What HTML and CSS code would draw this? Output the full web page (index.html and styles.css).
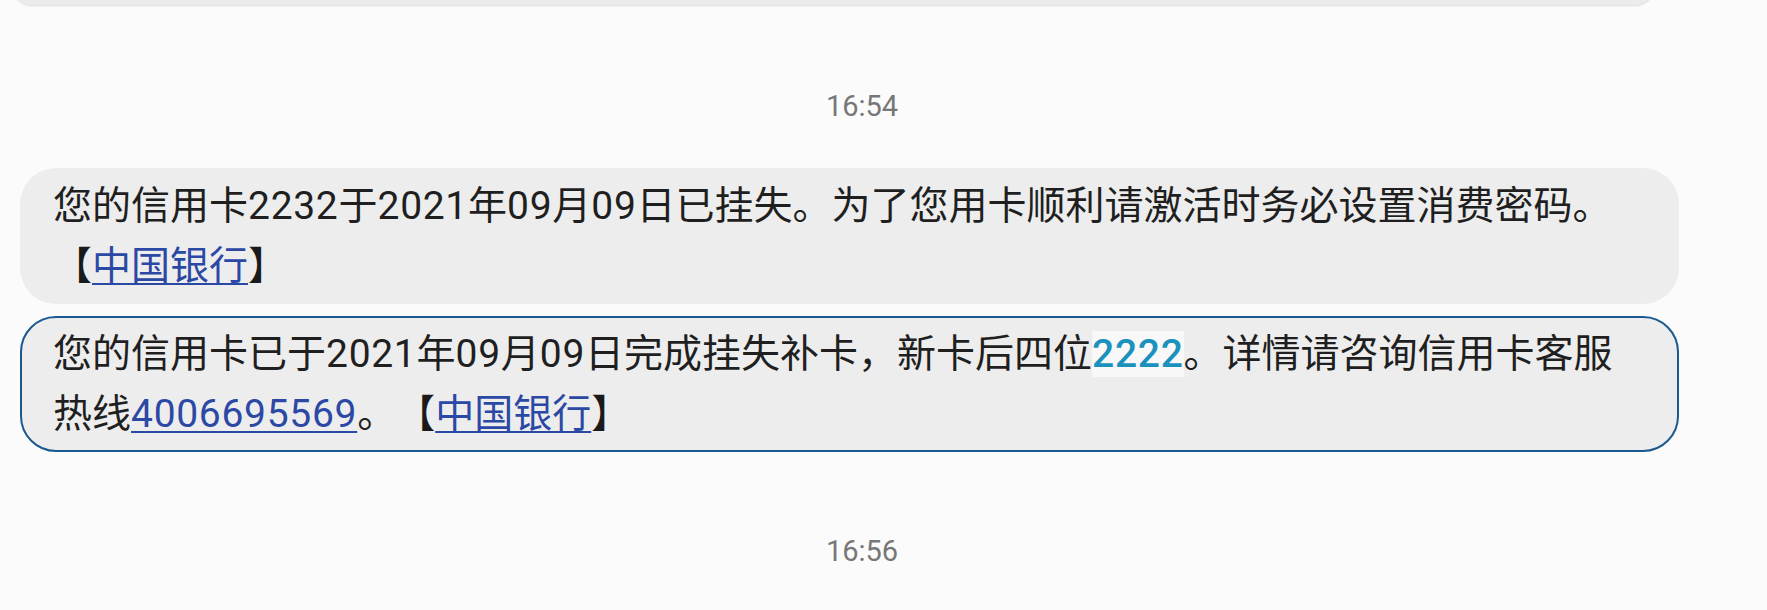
FILE: index.html
```html
<!DOCTYPE html>
<html lang="zh-CN">
<head>
<meta charset="utf-8">
<title>短信</title>
<link rel="stylesheet" href="styles.css">
</head>
<body>
<div class="thread">
  <div class="bubble bubble-prev"></div>
  <div class="time">16:54</div>
  <div class="bubble">您的信用卡<span class="num">2232</span>于<span class="num">2021</span>年<span class="num">09</span>月<span class="num">09</span>日已挂失。为了您用卡顺利请激活时务必设置消费密码。<span class="bracket">【</span><a class="link" href="#">中国银行</a><span class="bracket">】</span></div>
  <div class="bubble bubble-selected">您的信用卡已于<span class="num">2021</span>年<span class="num">09</span>月<span class="num">09</span>日完成挂失补卡，新卡后四位<span class="code num">2222</span>。详情请咨询信用卡客服热线<a class="link num" href="#">4006695569</a>。<span class="bracket">【</span><a class="link" href="#">中国银行</a><span class="bracket">】</span></div>
  <div class="time time-last">16:56</div>
</div>
</body>
</html>
```

FILE: styles.css
```css
html, body {
  margin: 0;
  padding: 0;
  background: #fbfbfb;
}

body {
  width: 1767px;
  height: 610px;
  overflow: hidden;
  font-family: Roboto, "Noto Sans CJK SC", sans-serif;
}

.thread {
  display: flex;
  flex-direction: column;
  align-items: flex-start;
}

.bubble {
  box-sizing: border-box;
  width: 1659px;
  margin-left: 20px;
  padding: 8px 49px 8px 33px;
  background: #ededed;
  border-radius: 36px;
  color: #1f1f1f;
  font-size: 39px;
  line-height: 60px;
  text-spacing-trim: space-all;
  word-break: normal;
}

.bubble-prev {
  width: 1643px;
  margin-left: 12px;
  height: 40px;
  margin-top: -35px;
  padding: 0;
  background: #ebebeb;
  box-shadow: 0 1px 2px rgba(0, 0, 0, 0.12);
}

.bubble + .bubble {
  margin-top: 12px;
}

.bubble-selected {
  border: 2px solid #1a5890;
  padding: 6px 47px 6px 31px;
}

.num {
  letter-spacing: 0.7px;
}

.time {
  align-self: stretch;
  box-sizing: border-box;
  padding-right: 43px;
  text-align: center;
  color: #777777;
  font-size: 29px;
  line-height: 40px;
  height: 40px;
  margin-top: 81px;
  margin-bottom: 42px;
}

.time-last {
  margin-top: 79px;
  margin-bottom: 0;
}

.link {
  color: #2b48a5;
  text-decoration: underline;
  text-decoration-thickness: 2px;
  text-underline-offset: 4px;
}

.bracket {
  color: #1a1a1a;
}

.code {
  color: #1a92bd;
  font-weight: 500;
  background: #f8f8f8;
}
```
